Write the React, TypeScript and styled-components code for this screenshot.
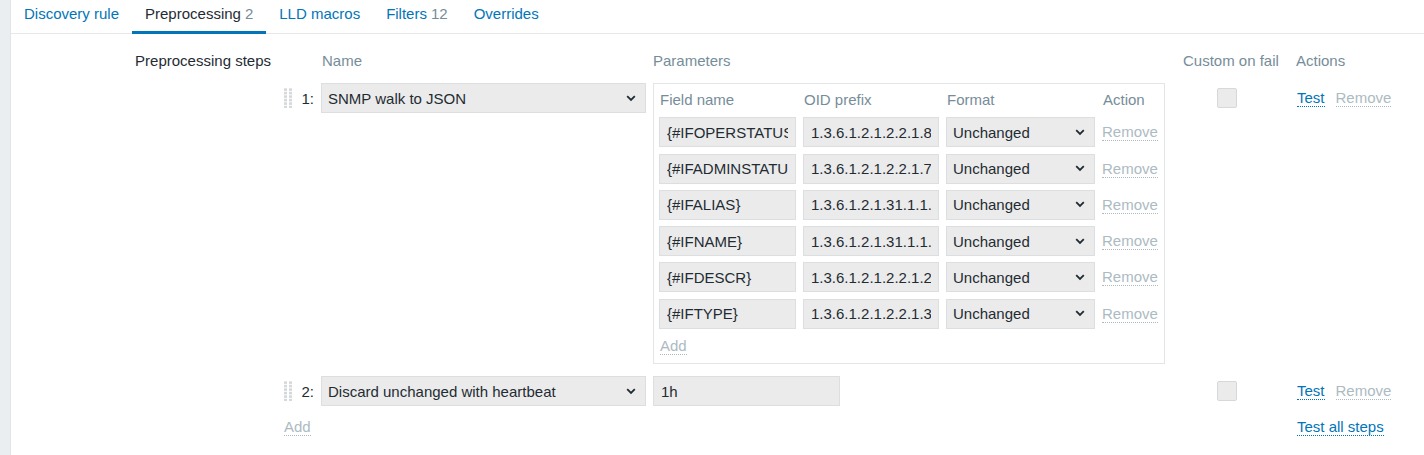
import React from "react";
import styled, { createGlobalStyle } from "styled-components";

const GlobalStyle = createGlobalStyle`
  html, body { margin: 0; padding: 0; background: #ffffff; }
  body {
    font-family: "Liberation Sans", Arial, sans-serif;
    font-size: 15px;
    color: #1f2c33;
  }
  * { box-sizing: border-box; }
`;

const Page = styled.div`
  display: flex;
  min-height: 455px;
  background: #ffffff;
`;

const SideStrip = styled.div`
  width: 11px;
  flex: none;
  background: #ebeef0;
  border-right: 1px solid #e1e5e8;
`;

const Panel = styled.div`
  flex: 1;
  display: flex;
  flex-direction: column;
`;

const TabNav = styled.nav`
  display: flex;
  height: 34px;
  border-bottom: 1px solid #e6e9eb;
`;

const Tab = styled.a<{ $active?: boolean }>`
  display: block;
  height: 34px;
  margin-bottom: -1px;
  padding: 5px 13px 0;
  line-height: 18px;
  color: ${(p) => (p.$active ? "#1f2c33" : "#0275b8")};
  border-bottom: 3px solid ${(p) => (p.$active ? "#0275b8" : "transparent")};
  text-decoration: none;
  white-space: nowrap;
  cursor: pointer;
`;

const Count = styled.span`
  color: #768d99;
  margin-left: 4px;
`;

const Form = styled.div`
  display: grid;
  grid-template-columns: 260px 1fr;
  column-gap: 12px;
  padding-top: 16px;
`;

const FormLabel = styled.div`
  text-align: right;
  line-height: 21px;
  white-space: nowrap;
`;

const StepsTable = styled.div`
  display: grid;
  grid-template-columns: 38px 332px 530px 113px 1fr;
  row-gap: 12px;
  align-items: start;
`;

const HeadCell = styled.div<{ $indent?: number }>`
  color: #768d99;
  line-height: 21px;
  white-space: nowrap;
  padding-left: ${(p) => p.$indent ?? 0}px;
`;

const NumCell = styled.div`
  display: flex;
  align-items: center;
  height: 30px;
  padding-left: 1px;
  padding-right: 7px;
`;

const StepNum = styled.span`
  margin-left: auto;
`;

const TextField = styled.input<{ $width: number }>`
  display: block;
  width: ${(p) => p.$width}px;
  height: 30px;
  margin: 0;
  background: #ebebeb;
  border: 1px solid #dcdfe1;
  border-radius: 0;
  padding: 0 7px;
  font-family: "Liberation Sans", Arial, sans-serif;
  font-size: 15px;
  color: #1f2c33;
  outline: none;
`;

const SelectBox = styled.div<{ $width: number }>`
  display: flex;
  align-items: center;
  justify-content: space-between;
  width: ${(p) => p.$width}px;
  height: 30px;
  background: #ebebeb;
  border: 1px solid #dcdfe1;
  padding: 0 9px 0 6px;
  white-space: nowrap;
  overflow: hidden;
  color: #1f2c33;
`;

const ParamsBox = styled.div`
  width: 512px;
  border: 1px solid #e3e6e8;
  padding: 5px 5px 6px;
`;

const ParamsGrid = styled.div`
  display: grid;
  grid-template-columns: 137px 136px 149px 1fr;
  column-gap: 7px;
  row-gap: 6.3px;
  align-items: center;
`;

const ParamsHead = styled.div`
  color: #768d99;
  line-height: 22px;
  padding-left: 1px;
  white-space: nowrap;
`;

const ActionLink = styled.a<{ $disabled?: boolean }>`
  display: inline-block;
  color: ${(p) => (p.$disabled ? "#acbbc2" : "#0275b8")};
  border-bottom: 1px dotted ${(p) => (p.$disabled ? "#acbbc2" : "#0275b8")};
  line-height: 17px;
  text-decoration: none;
  white-space: nowrap;
  cursor: ${(p) => (p.$disabled ? "default" : "pointer")};
`;

const AddRow = styled.div`
  grid-column: 1 / -1;
  padding-left: 1px;
  padding-top: 2px;
  height: 22px;
`;

const CheckCell = styled.div`
  height: 30px;
  display: flex;
  align-items: center;
  padding-left: 34px;
`;

const Checkbox = styled.span`
  display: block;
  width: 20px;
  height: 20px;
  background: #ebebeb;
  border: 1px solid #d5d9dc;
  border-radius: 2px;
`;

const ActionsCell = styled.div`
  height: 30px;
  display: flex;
  align-items: center;
  gap: 11px;
  padding-left: 1px;
`;

const FooterCell = styled.div<{ $col: string }>`
  grid-column: ${(p) => p.$col};
  padding-left: 1px;
`;

const Chevron = () => (
  <svg width="10" height="7" viewBox="0 0 10 7">
    <path d="M1.2 1.2 L5 5 L8.8 1.2" fill="none" stroke="#1f2c33" strokeWidth="1.8" />
  </svg>
);

const DragHandle = () => (
  <svg width="8" height="20" viewBox="0 0 8 20">
    {[0, 1, 2, 3, 4, 5].map((r) =>
      [0, 1].map((c) => (
        <rect key={`${r}-${c}`} x={c * 5} y={r * 3.5 + 0.3} width="3" height="2.6" fill="#d6d9db" />
      ))
    )}
  </svg>
);

type Param = { name: string; oid: string };

const params: Param[] = [
  { name: "{#IFOPERSTATUS}", oid: "1.3.6.1.2.1.2.2.1.8" },
  { name: "{#IFADMINSTATUS}", oid: "1.3.6.1.2.1.2.2.1.7" },
  { name: "{#IFALIAS}", oid: "1.3.6.1.2.1.31.1.1.1.18" },
  { name: "{#IFNAME}", oid: "1.3.6.1.2.1.31.1.1.1.1" },
  { name: "{#IFDESCR}", oid: "1.3.6.1.2.1.2.2.1.2" },
  { name: "{#IFTYPE}", oid: "1.3.6.1.2.1.2.2.1.3" },
];

const StepActions = () => (
  <ActionsCell>
    <ActionLink>Test</ActionLink>
    <ActionLink $disabled>Remove</ActionLink>
  </ActionsCell>
);

export default function App() {
  return (
    <>
      <GlobalStyle />
      <Page>
        <SideStrip />
        <Panel>
          <TabNav>
            <Tab>Discovery rule</Tab>
            <Tab $active>
              Preprocessing<Count>2</Count>
            </Tab>
            <Tab>LLD macros</Tab>
            <Tab>
              Filters<Count>12</Count>
            </Tab>
            <Tab>Overrides</Tab>
          </TabNav>
          <Form>
            <FormLabel>Preprocessing steps</FormLabel>
            <StepsTable>
              <div />
              <HeadCell $indent={1}>Name</HeadCell>
              <HeadCell>Parameters</HeadCell>
              <HeadCell>Custom on fail</HeadCell>
              <HeadCell>Actions</HeadCell>

              <NumCell>
                <DragHandle />
                <StepNum>1:</StepNum>
              </NumCell>
              <SelectBox $width={325}>
                <span>SNMP walk to JSON</span>
                <Chevron />
              </SelectBox>
              <ParamsBox>
                <ParamsGrid>
                  <ParamsHead>Field name</ParamsHead>
                  <ParamsHead>OID prefix</ParamsHead>
                  <ParamsHead>Format</ParamsHead>
                  <ParamsHead>Action</ParamsHead>
                  {params.map((p) => (
                    <React.Fragment key={p.name}>
                      <TextField $width={137} readOnly value={p.name} />
                      <TextField $width={136} readOnly value={p.oid} />
                      <SelectBox $width={149}>
                        <span>Unchanged</span>
                        <Chevron />
                      </SelectBox>
                      <div>
                        <ActionLink $disabled>Remove</ActionLink>
                      </div>
                    </React.Fragment>
                  ))}
                  <AddRow>
                    <ActionLink $disabled>Add</ActionLink>
                  </AddRow>
                </ParamsGrid>
              </ParamsBox>
              <CheckCell>
                <Checkbox />
              </CheckCell>
              <StepActions />

              <NumCell>
                <DragHandle />
                <StepNum>2:</StepNum>
              </NumCell>
              <SelectBox $width={325}>
                <span>Discard unchanged with heartbeat</span>
                <Chevron />
              </SelectBox>
              <TextField $width={187} readOnly value="1h" />
              <CheckCell>
                <Checkbox />
              </CheckCell>
              <StepActions />

              <FooterCell $col="1 / 5">
                <ActionLink $disabled>Add</ActionLink>
              </FooterCell>
              <FooterCell $col="5 / 6">
                <ActionLink>Test all steps</ActionLink>
              </FooterCell>
            </StepsTable>
          </Form>
        </Panel>
      </Page>
    </>
  );
}
